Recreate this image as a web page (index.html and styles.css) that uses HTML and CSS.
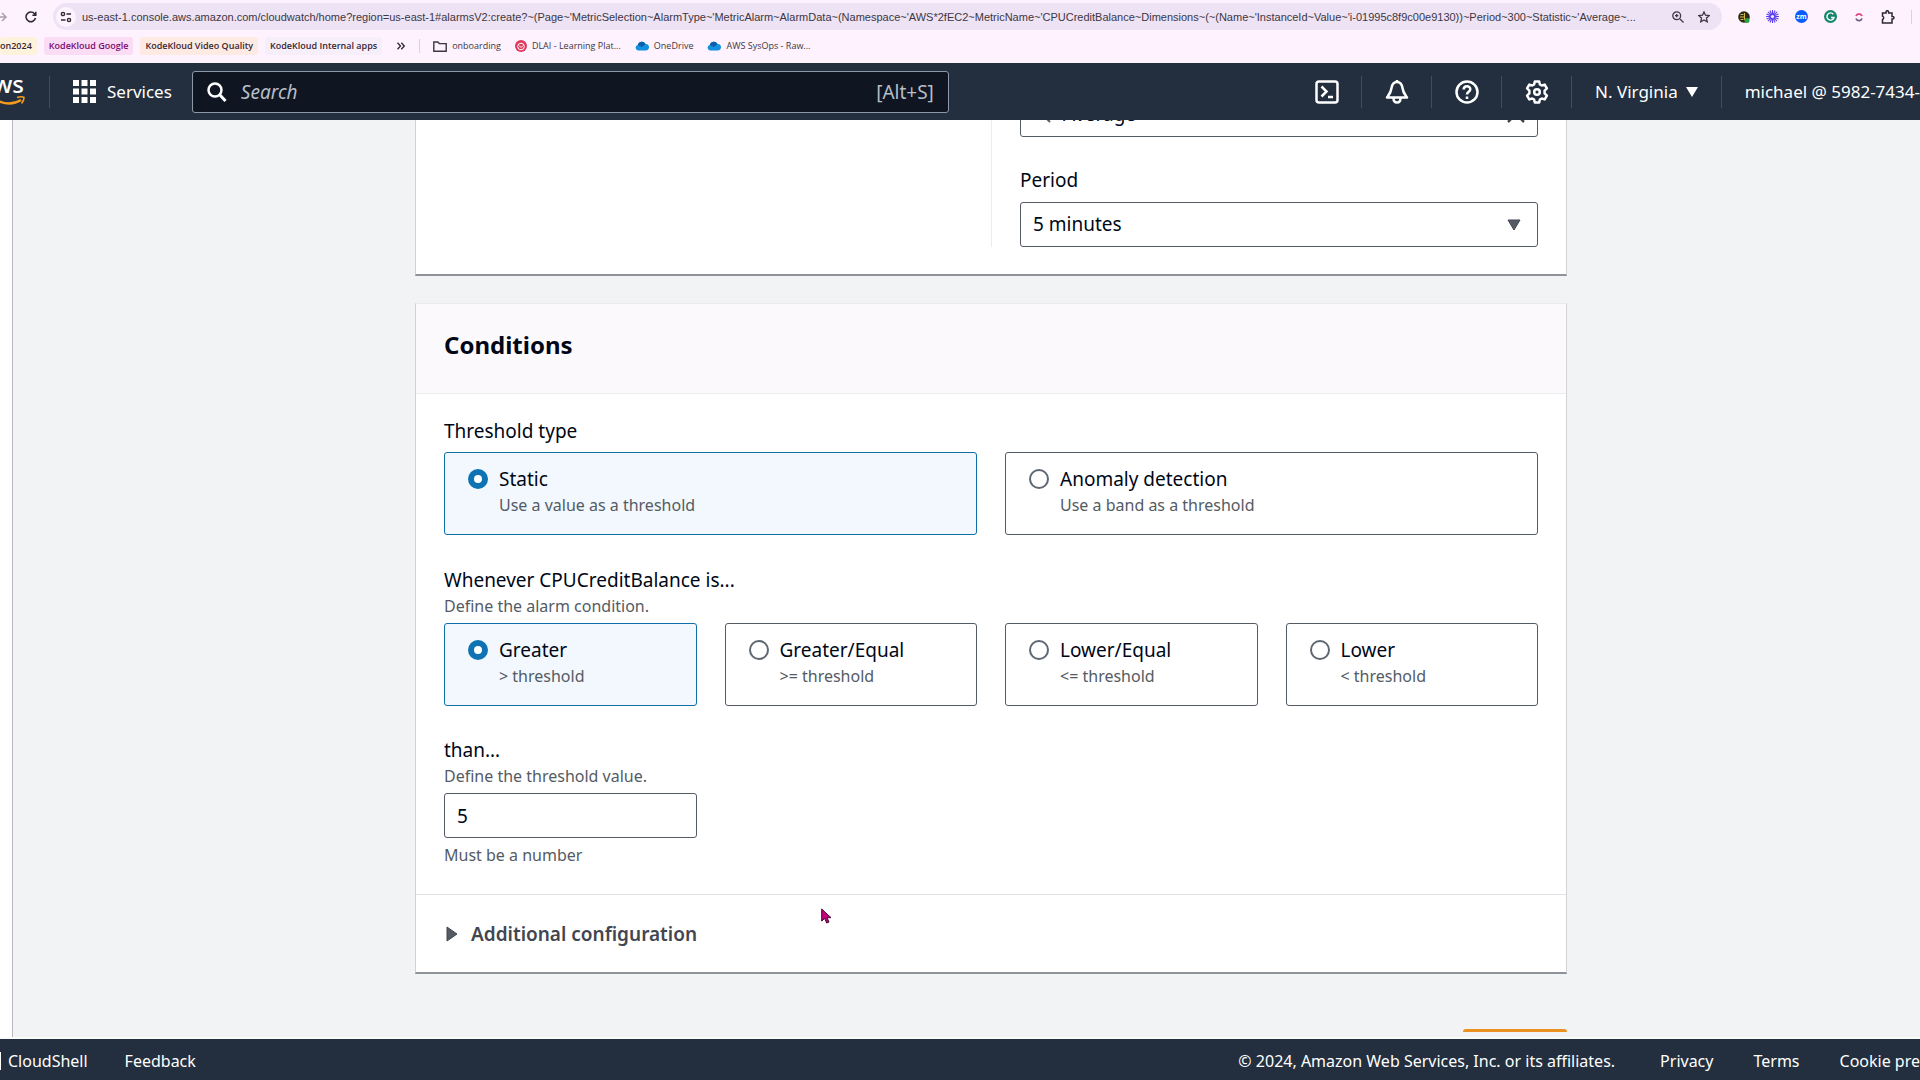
FILE: index.html
```html
<!DOCTYPE html>
<html lang="en">

<head>
    <meta charset="UTF-8">
    <meta name="viewport" content="width=device-width, initial-scale=1.0">
    <title>Create alarm | CloudWatch</title>
    <link rel="stylesheet" href="styles.css">
</head>

<body>
    <!-- Browser toolbar -->
    <div class="browser">
        <div class="toolbar">
            <svg class="forward" width="8" height="16" viewBox="0 0 8 16"><path d="M0 8h6M2 4l4 4-4 4" fill="none" stroke="#a9a0ac" stroke-width="1.5"/></svg>
            <button class="plain" aria-label="Reload">
                <svg width="12" height="12" viewBox="0 0 12 12"><path d="M10.5 7A4.8 4.8 0 1 1 9.5 2.8L10.6 4M10.8.8V4.2H7.4" fill="none" stroke="#2c2830" stroke-width="1.5"/></svg>
            </button>
            <div class="address">
                <span class="site-info">
                    <svg width="12" height="12" viewBox="0 0 12 12"><g fill="none" stroke="#2c2830" stroke-width="1.4"><circle cx="3" cy="3" r="1.6"/><path d="M6.5 3H11M1 9h4.5"/><circle cx="9" cy="9" r="1.6"/></g></svg>
                </span>
                <input type="text" aria-label="Address" value="us-east-1.console.aws.amazon.com/cloudwatch/home?region=us-east-1#alarmsV2:create?~(Page~'MetricSelection~AlarmType~'MetricAlarm~AlarmData~(Namespace~'AWS*2fEC2~MetricName~'CPUCreditBalance~Dimensions~(~(Name~'InstanceId~Value~'i-01995c8f9c00e9130))~Period~300~Statistic~'Average~...">
                <button class="plain" aria-label="Zoom">
                    <svg width="12" height="12" viewBox="0 0 12 12"><path d="M8 8l3.5 3.5M3 4.6h3.4M4.7 2.9v3.4" stroke="#3c3741" stroke-width="1.3"/><circle cx="4.7" cy="4.7" r="3.9" fill="none" stroke="#3c3741" stroke-width="1.3"/></svg>
                </button>
                <button class="plain" aria-label="Bookmark">
                    <svg width="12" height="12" viewBox="0 0 12 12"><path d="M6 .9l1.5 3.3 3.7.4-2.7 2.5.7 3.7L6 9 2.8 10.8l.7-3.7L.8 4.6l3.7-.4z" fill="none" stroke="#3c3741" stroke-width="1.3"/></svg>
                </button>
            </div>
            <div class="extensions">
                <svg width="12" height="12" viewBox="0 0 12 12"><circle cx="6" cy="6" r="5.8" fill="#2a2a1c"/><path d="M2.5 3.5h3M2 6h4M2.5 8.500h3M6.500 2v7" stroke="#d8b93c"/><circle cx="9" cy="9.500" r="2.500" fill="#2f9e44"/></svg>
                <svg width="13" height="13" viewBox="0 0 12 12"><path d="M6 0v12M0 6h12M1.800 1.800l8.400 8.400M10.200 1.800l-8.400 8.400M3.700.5l4.600 11M8.300.5l-4.600 11M.5 3.700l11 4.600M.5 8.300l11-4.600" stroke="#5b3fe8" stroke-width="1"/><circle cx="6" cy="6" r="1.500" fill="#f3edfb"/></svg>
                <svg width="13" height="13" viewBox="0 0 13 13"><circle cx="6.5" cy="6.5" r="6.5" fill="#0b5cff"/><text x="6.5" y="9" font-size="7" font-weight="700" text-anchor="middle" fill="#fff">zm</text></svg>
                <svg width="13" height="13" viewBox="0 0 13 13"><circle cx="6.5" cy="6.5" r="6.5" fill="#14856b"/><path d="M9.3 4.2a3.6 3.6 0 1 0 .7 3.300H7" fill="none" stroke="#fff" stroke-width="1.4"/></svg>
                <svg width="12" height="12" viewBox="0 0 12 12"><path d="M3 5a3.2 3.200 0 0 1 6 0" fill="none" stroke="#e0457b" stroke-width="1.8"/><path d="M3 7.500a3.200 3.200 0 0 0 6 0" fill="none" stroke="#6b5b7e" stroke-width="1.8"/></svg>
                <svg width="14" height="14" viewBox="0 0 14 14"><path d="M1.5 3H5V2a1.300 1.300 0 0 1 2.600 0v1h3.400v3.500h.7a1.300 1.300 0 0 1 0 2.600H11V13H1.500V9.500a1.800 1.800 0 0 0 0-3.400z" fill="none" stroke="#2c2830" stroke-width="1.5"/></svg>
                <span class="toolbar-line"></span>
            </div>
        </div>
        <div class="bookmarks">
            <a href="#" class="chip yellow">on2024</a>
            <a href="#" class="chip pink">KodeKloud Google</a>
            <a href="#" class="chip orange">KodeKloud Video Quality</a>
            <a href="#" class="chip gray">KodeKloud Internal apps</a>
            <button class="plain more" aria-label="More">
                <svg width="8" height="8" viewBox="0 0 8 8"><path d="M.5.8L3.500 4l-3 3.200M4.300.8L7.300 4l-3 3.200" fill="none" stroke="#2c2830" stroke-width="1.3"/></svg>
            </button>
            <span class="bookmark-line"></span>
            <a href="#" class="bookmark">
                <svg width="14" height="11" viewBox="0 0 14 11"><path d="M.8 1h4l1.5 1.600h6.900v7.600H.8z" fill="none" stroke="#3c3741" stroke-width="1.4"/></svg>
                onboarding
            </a>
            <a href="#" class="bookmark">
                <svg width="12" height="12" viewBox="0 0 12 12"><circle cx="6" cy="6" r="6" fill="#e03a5c"/><circle cx="6" cy="6.5" r="3.300" fill="none" stroke="#fff"/><path d="M4 5.500l2 2 2-2" fill="none" stroke="#fff"/></svg>
                DLAI - Learning Plat...
            </a>
            <a href="#" class="bookmark">
                <svg width="14" height="10" viewBox="0 0 14 10"><path d="M3 9.500a2.800 2.800 0 0 1-.3-5.500A4.200 4.200 0 0 1 10.500 3a3 3 0 0 1 .5 6.500z" fill="#1490df"/><path d="M2.700 4A4.200 4.200 0 0 1 10.500 3L7 6z" fill="#0a5fa8"/></svg>
                OneDrive
            </a>
            <a href="#" class="bookmark">
                <svg width="14" height="10" viewBox="0 0 14 10"><path d="M3 9.500a2.800 2.800 0 0 1-.3-5.500A4.200 4.200 0 0 1 10.500 3a3 3 0 0 1 .5 6.500z" fill="#1490df"/><path d="M2.700 4A4.200 4.200 0 0 1 10.500 3L7 6z" fill="#0a5fa8"/></svg>
                AWS SysOps - Raw...
            </a>
        </div>
    </div>

    <!-- AWS navigation -->
    <header class="nav">
        <a href="#" class="logo" aria-label="AWS">
            <svg width="26" height="32" viewBox="0 0 26 32"><text x="24" y="17" font-size="24" font-weight="500" text-anchor="end" fill="#fff">ws</text><path d="M-4 24Q10 31 21 24" fill="none" stroke="#f79b1e" stroke-width="2.5"/><path d="M17 21.5q5-1.500 7 0 0 3.500-2.500 6" fill="none" stroke="#f79b1e" stroke-width="1.6"/></svg>
        </a>
        <button class="services">
            <svg width="23" height="23" viewBox="0 0 23 23" fill="#fff"><path d="M0 0h6v6H0zM8.500 0h6v6h-6zM17 0h6v6h-6zM0 8.500h6v6H0zM8.500 8.500h6v6h-6zM17 8.500h6v6h-6zM0 17h6v6H0zM8.500 17h6v6h-6zM17 17h6v6h-6z"/></svg>
            Services
        </button>
        <div class="search">
            <svg width="20" height="20" viewBox="0 0 20 20"><circle cx="8" cy="8" r="6.5" fill="none" stroke="#fff" stroke-width="2.5"/><path d="M12.5 12.500l6 6.500" stroke="#fff" stroke-width="3"/></svg>
            <input type="text" placeholder="Search" aria-label="Search">
            <span>[Alt+S]</span>
        </div>
        <div class="nav-right">
            <button class="nav-icon" aria-label="CloudShell">
                <svg width="24" height="24" viewBox="0 0 24 24" fill="none" stroke="#fff" stroke-width="2.5"><rect x="1.5" y="1.500" width="21" height="21" rx="2.500"/><path d="M6.500 6.500l5 5-5 5M13 17h5"/></svg>
            </button>
            <button class="nav-icon" aria-label="Notifications">
                <svg width="24" height="24" viewBox="0 0 24 24" fill="none" stroke="#fff" stroke-width="2.5"><path d="M12 2c-4 0-5 3-5.500 6C6 12.500 4.500 14 2 17.500h20c-2.500-3.500-4-5-4.500-9.500-.5-3-1.500-6-5.500-6z" stroke-linejoin="round"/><path d="M8.500 18c0 6 7 6 7 0M12 0v2"/></svg>
            </button>
            <button class="nav-icon" aria-label="Help">
                <svg width="24" height="24" viewBox="0 0 24 24" fill="none" stroke="#fff" stroke-width="2.5"><circle cx="12" cy="12" r="10.5"/><path d="M8.700 9.500c0-4.500 6.600-4.300 6.600-.3 0 2.500-3.300 2.600-3.300 5.300M12 16.500v2.500"/></svg>
            </button>
            <button class="nav-icon" aria-label="Settings">
                <svg width="24" height="24" viewBox="0 0 24 24" fill="none" stroke="#fff" stroke-width="2.5"><path d="M9.800 1.500h4.400l.7 3 1.800 1 3-.9 2.200 3.800-2.300 2.200v2.800l2.300 2.200-2.200 3.800-3-.9-1.800 1-.7 3H9.800l-.7-3-1.800-1-3 .9-2.200-3.800 2.300-2.200v-2.800L2.100 8.400l2.200-3.800 3 .9 1.800-1z" stroke-linejoin="round"/><circle cx="12" cy="12" r="2.800"/></svg>
            </button>
            <button class="region">
                N. Virginia
                <svg width="12" height="10" viewBox="0 0 12 10"><path d="M0 0h12L6 10z" fill="#fff"/></svg>
            </button>
            <button class="account">michael @ 5982-7434-</button>
        </div>
    </header>

    <!-- Alarm form -->
    <div class="page">
        <aside class="side"></aside>
        <main class="content">
            <section class="card metric">
                <div class="metric-fields">
                    <div class="field statistic">
                        <svg width="18" height="18" viewBox="0 0 18 18"><circle cx="7" cy="7" r="5.5" fill="none" stroke="#545b64" stroke-width="2"/><path d="M11 11l6 6" stroke="#545b64" stroke-width="2"/></svg>
                        <input type="text" value="Average" aria-label="Statistic">
                        <button class="plain" aria-label="Clear">
                            <svg width="18" height="18" viewBox="0 0 18 18"><path d="M1 1l16 16M17 1L1 17" stroke="#424650" stroke-width="2.5"/></svg>
                        </button>
                    </div>
                    <label for="period">Period</label>
                    <div class="field period">
                        <select id="period">
                            <option>5 minutes</option>
                        </select>
                        <svg width="14" height="12" viewBox="0 0 14 12"><path d="M1 1h12L7 11z" fill="#545b64" stroke="#424650" stroke-linejoin="round"/></svg>
                    </div>
                </div>
            </section>

            <section class="card">
                <div class="card-header">
                    <h2>Conditions</h2>
                </div>
                <div class="card-body">
                    <fieldset>
                        <legend>Threshold type</legend>
                        <div class="tiles two">
                            <label class="tile">
                                <input type="radio" name="type" checked>
                                <span>Static <small>Use a value as a threshold</small></span>
                            </label>
                            <label class="tile">
                                <input type="radio" name="type">
                                <span>Anomaly detection <small>Use a band as a threshold</small></span>
                            </label>
                        </div>
                    </fieldset>
                    <fieldset>
                        <legend>Whenever CPUCreditBalance is... <small>Define the alarm condition.</small></legend>
                        <div class="tiles four">
                            <label class="tile">
                                <input type="radio" name="operator" checked>
                                <span>Greater <small>&gt; threshold</small></span>
                            </label>
                            <label class="tile">
                                <input type="radio" name="operator">
                                <span>Greater/Equal <small>&gt;= threshold</small></span>
                            </label>
                            <label class="tile">
                                <input type="radio" name="operator">
                                <span>Lower/Equal <small>&lt;= threshold</small></span>
                            </label>
                            <label class="tile">
                                <input type="radio" name="operator">
                                <span>Lower <small>&lt; threshold</small></span>
                            </label>
                        </div>
                    </fieldset>
                    <div class="threshold">
                        <label for="threshold">than… <small>Define the threshold value.</small></label>
                        <div class="tiles four">
                            <input type="text" id="threshold" value="5">
                        </div>
                        <small class="hint">Must be a number</small>
                    </div>
                </div>
                <button class="expand">
                    <svg width="12" height="16" viewBox="0 0 12 16"><path d="M1 1l10 7-10 7z" fill="#545b64" stroke="#424650" stroke-linejoin="round"/></svg>
                    Additional configuration
                </button>
            </section>

            <div class="actions">
                <button class="next" aria-label="Next"></button>
            </div>
        </main>
        <svg class="cursor" width="11" height="16" viewBox="0 0 11 16"><path d="M.7 1v12l3-2.500 2 4.500 2.300-1-2-4.300h4z" fill="#c4007a" stroke="#3a0a34"/></svg>
    </div>

    <footer class="footer">
        <a href="#" class="cloudshell">CloudShell</a>
        <a href="#">Feedback</a>
        <div class="footer-right">
            <span class="copyright">© 2024, Amazon Web Services, Inc. or its affiliates.</span>
            <a href="#">Privacy</a>
            <a href="#">Terms</a>
            <a href="#">Cookie pre</a>
        </div>
    </footer>
</body>

</html>
```

FILE: styles.css
```css
* {
    box-sizing: border-box;
}

body {
    margin: 0;
    height: 100vh;
    display: flex;
    flex-direction: column;
    overflow: hidden;
    font-family: 'Noto Sans', 'Open Sans', sans-serif;
    font-size: 19px;
    line-height: 26px;
    color: #000716;
    white-space: nowrap;
}

button,
input,
select {
    font: inherit;
    color: inherit;
}

button {
    border: none;
    background: none;
    padding: 0;
    cursor: pointer;
}

a {
    color: inherit;
    text-decoration: none;
}

svg {
    display: block;
    flex-shrink: 0;
}

small {
    display: block;
    font-size: 16px;
    color: #545b64;
}

/* browser toolbar */
.browser {
    height: 63px;
    flex-shrink: 0;
    background-color: #fdf2fd;
    font-family: 'Open Sans', sans-serif;
    font-size: 11px;
    line-height: 18px;
    color: #3c3741;
}

.toolbar {
    display: flex;
    align-items: center;
    padding-top: 3px;
}

.forward {
    margin-right: 17px;
}

.address {
    flex: 1;
    display: flex;
    align-items: center;
    gap: 14px;
    height: 27px;
    margin-left: 16px;
    padding: 0 12px 0 3px;
    border-radius: 14px;
    background-color: #eee2f5;
}

.site-info {
    display: flex;
    align-items: center;
    justify-content: center;
    width: 20px;
    height: 20px;
    border-radius: 50%;
    background-color: #fdf2fd;
}

.address input {
    flex: 1;
    min-width: 0;
    margin-left: -8px;
    border: none;
    padding: 0;
    background: none;
    font-family: 'Liberation Sans', sans-serif;
    text-overflow: ellipsis;
}

.extensions {
    display: flex;
    align-items: center;
    gap: 16px;
    padding: 0 8px 0 16px;
}

.toolbar-line {
    width: 1px;
    height: 14px;
    background-color: #e3c9ef;
}

.bookmarks {
    display: flex;
    align-items: center;
    padding-top: 7px;
    font-size: 9px;
}

.chip {
    padding: 0 5px;
    margin-right: 7px;
    border-radius: 3px;
    font-weight: 600;
    color: #3a2630;
}

.yellow {
    padding-left: 0;
    background-color: #fdf3dd;
}

.pink {
    background-color: #fbdcf5;
    color: #7a0b72;
}

.orange {
    background-color: #fdeae2;
}

.gray {
    background-color: #f6effa;
}

.more {
    margin: 0 14px 0 8px;
}

.bookmark-line {
    width: 1px;
    height: 14px;
    margin-right: 13px;
    background-color: #e3c9ef;
}

.bookmark {
    display: flex;
    align-items: center;
    gap: 5px;
    margin-right: 14px;
}

/* navigation */
.nav {
    display: flex;
    align-items: center;
    height: 57px;
    flex-shrink: 0;
    background-color: #232f3e;
    color: #fff;
    font-size: 17px;
}

.logo {
    padding-right: 23px;
    border-right: 1px solid #414d5c;
}

.services {
    display: flex;
    align-items: center;
    gap: 11px;
    margin: 0 20px 0 23px;
}

.search {
    display: flex;
    align-items: center;
    gap: 14px;
    width: 757px;
    height: 42px;
    padding: 0 14px;
    border: 1px solid #8d99a8;
    border-radius: 3px;
    background-color: #0f1621;
    color: #b6bec9;
    font-size: 19px;
}

.search input {
    flex: 1;
    border: none;
    padding: 0;
    background: none;
    font-style: italic;
}

.search input::placeholder {
    color: #b6bec9;
}

.nav-right {
    display: flex;
    margin-left: auto;
}

.nav-right button {
    height: 32px;
    border-left: 1px solid #414d5c;
}

.nav-icon {
    padding: 0 22px 0 23px;
}

.nav-right .nav-icon:first-child {
    border-left: none;
}

.nav-right .region {
    display: flex;
    align-items: center;
    gap: 8px;
    padding: 0 23px;
}

.account {
    padding-left: 23px;
}

/* page */
.page {
    position: relative;
    flex: 1;
    min-height: 0;
    display: flex;
    overflow: hidden;
    border-bottom: 2px solid #fbfbfc;
    background-color: #f2f3f5;
}

.side {
    width: 13px;
    background-color: #fff;
    border-right: 1px solid #b5b8bd;
}

.content {
    flex: 1;
    margin-top: -28px;
    padding: 0 353px 0 402px;
}

.card {
    margin-bottom: 27px;
    background-color: #fff;
    border: 1px solid #d0d2d6;
    border-top-color: #eaeded;
    border-bottom: 2px solid #8f9399;
}

.metric {
    display: flex;
    justify-content: flex-end;
    padding-bottom: 27px;
    border-top: none;
}

.metric-fields {
    width: 50%;
    padding: 0 28px;
    border-left: 1px solid #eaeded;
}

.field {
    display: flex;
    align-items: center;
    height: 45px;
    border: 1px solid #545b64;
    border-radius: 3px;
}

.statistic {
    gap: 12px;
    padding: 0 12px 2px;
    margin-bottom: 30px;
}

.statistic input {
    flex: 1;
    border: none;
    padding: 0;
    background: none;
}

.metric-fields label {
    display: block;
    margin-bottom: 9px;
}

.period {
    position: relative;
}

.period select {
    width: 100%;
    height: 100%;
    padding: 0 12px 2px;
    border: none;
    background: none;
    appearance: none;
}

.period svg {
    position: absolute;
    right: 16px;
    pointer-events: none;
}

.card-header {
    padding: 27px 28px 34px;
    border-bottom: 1px solid #eaeded;
    background-color: #fbf9fc;
}

h2 {
    margin: 0;
    font-size: 24px;
    line-height: 28px;
}

.card-body {
    padding: 24px 28px 26px;
}

fieldset {
    border: none;
    padding: 0;
    margin: 0 0 31px;
}

fieldset:first-child {
    margin-bottom: 32px;
}

legend {
    padding: 0 0 8px;
}

legend:has(small),
.threshold > label {
    padding-bottom: 4px;
}

.threshold > label {
    display: block;
}

.tiles {
    display: grid;
    gap: 28px;
}

.two {
    grid-template-columns: repeat(2, 1fr);
}

.four {
    grid-template-columns: repeat(4, 1fr);
}

.tile {
    display: flex;
    gap: 11px;
    height: 83px;
    padding: 13px 23px;
    border: 1px solid #545b64;
    border-radius: 3px;
}

.tile:has(:checked) {
    border-color: #0f6fa8;
    background-color: #f2f8fd;
}

.tile input {
    appearance: none;
    width: 20px;
    height: 20px;
    margin: 3px 0;
    border: 2px solid #5f6771;
    border-radius: 50%;
    background-color: #fff;
}

.tile input:checked {
    border: 6px solid #0f73b3;
}

#threshold {
    width: 100%;
    height: 45px;
    padding: 0 12px;
    border: 1px solid #545b64;
    border-radius: 3px;
}

.hint {
    margin-top: 4px;
}

.expand {
    display: flex;
    align-items: center;
    gap: 13px;
    width: 100%;
    height: 78px;
    padding: 0 30px;
    border-top: 1px solid #dfe1e4;
    font-weight: 600;
    color: #424650;
}

.actions {
    display: flex;
    justify-content: flex-end;
    height: 3px;
    margin-top: 55px;
    overflow: hidden;
}

.next {
    width: 104px;
    height: 44px;
    border-radius: 3px;
    background-color: #ec9021;
}

/* mouse pointer */
.cursor {
    position: absolute;
    left: 821px;
    top: 788px;
}

/* footer */
.footer {
    display: flex;
    align-items: center;
    height: 41px;
    flex-shrink: 0;
    padding-top: 2px;
    background-color: #232f3e;
    color: #fff;
    font-size: 16px;
}

.cloudshell {
    margin-right: 37px;
    padding-left: 7px;
    border-left: 1px solid #fff;
    line-height: 18px;
}

.footer-right {
    display: flex;
    gap: 40px;
    margin-left: auto;
}

.copyright {
    margin-right: 5px;
}
```
